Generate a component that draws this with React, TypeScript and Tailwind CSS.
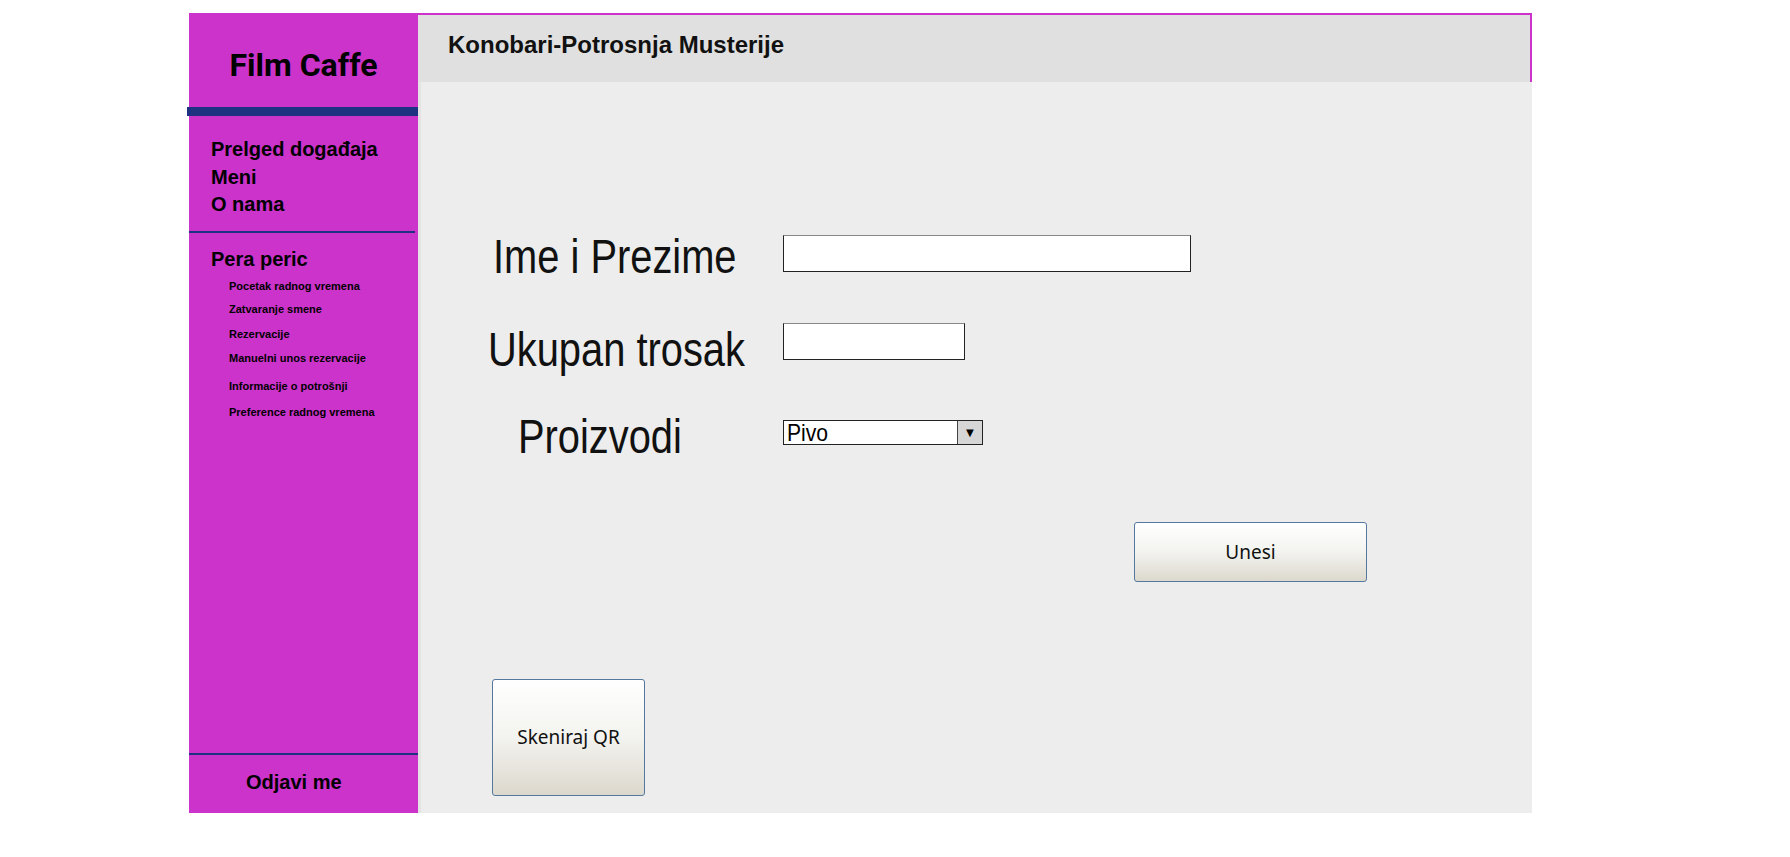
import React from "react";

const subItems = [
  { label: "Pocetak radnog vremena", mt: "mt-[9px]" },
  { label: "Zatvaranje smene", mt: "mt-[10px]" },
  { label: "Rezervacije", mt: "mt-[12px]" },
  { label: "Manuelni unos rezervacije", mt: "mt-[11px]" },
  { label: "Informacije o potrošnji", mt: "mt-[15px]" },
  { label: "Preference radnog vremena", mt: "mt-[13px]" },
];

function Sidebar() {
  return (
    <div className="w-[229px] h-full bg-[#cb33cb] flex flex-col font-['Liberation_Sans',Arial,sans-serif] text-black">
      <div className="h-[94px] pt-[33px] text-center font-['Roboto',sans-serif] font-bold text-[32px] leading-[38px]">
        Film Caffe
      </div>
      <div className="h-[9px] w-[234px] -ml-[2px] bg-[#1f3282]" />

      <div className="mt-[20px] pl-[22px] font-bold text-[20px] leading-[27.5px]">
        <div>Prelged događaja</div>
        <div>Meni</div>
        <div>O nama</div>
      </div>
      <div className="mt-[12px] h-[2px] w-[226px] bg-[#1f3282]" />

      <div className="mt-[14px] pl-[22px] font-bold text-[20px] leading-[24px]">Pera peric</div>
      <div className="pl-[40px]">
        {subItems.map((s) => (
          <div key={s.label} className={`${s.mt} font-bold text-[11px] leading-[13px]`}>
            {s.label}
          </div>
        ))}
      </div>

      <div className="mt-auto h-[60px]">
        <div className="h-[2px] bg-[#1f3282]" />
        <div className="mt-[15px] pl-[57px] font-bold text-[20px] leading-[24px]">Odjavi me</div>
      </div>
    </div>
  );
}

// the labels use a condensed Arial; no narrow face is installed, so squeeze it
function FormLabel({ text, indent }: { text: string; indent: string }) {
  return (
    <div className="w-[295px] shrink-0">
      <div
        className={`${indent} inline-block origin-left scale-x-[0.83] font-['Liberation_Sans',Arial,sans-serif] text-[48px] leading-[48px] text-[#111] whitespace-nowrap`}
      >
        {text}
      </div>
    </div>
  );
}

function WinButton({ children, className }: { children: React.ReactNode; className: string }) {
  return (
    <button
      className={`${className} flex items-center justify-center rounded-[3px] border border-[#55789f] bg-gradient-to-b from-[#ffffff] via-[#f3f3ef] to-[#dcd8cd] font-['Noto_Sans',sans-serif] text-[19px] text-[#111]`}
    >
      {children}
    </button>
  );
}

export default function App() {
  return (
    <div className="w-[1790px] h-[857px] bg-white overflow-hidden">
      <div className="flex pt-[13px] pl-[189px] h-[813px]">
        <Sidebar />
        <div className="w-[1114px] h-full flex flex-col">
          <div className="h-[69px] shrink-0 bg-[#e0e0e0] border-t-2 border-r-2 border-[#cb33cb] pt-[16px] pl-[30px]">
            <div className="font-['Liberation_Sans',Arial,sans-serif] font-bold text-[24px] leading-[28px] text-[#111]">
              Konobari-Potrosnja Musterije
            </div>
          </div>
          <div className="flex-1 bg-[#ededed] border-l-[3px] border-[#e3e3e3] pl-[67px] pt-[151px]">
            <div className="flex items-start">
              <FormLabel text="Ime i Prezime" indent="ml-[5px]" />
              <div className="mt-[2px] w-[408px] h-[37px] bg-white border border-[#222] border-t-[#888]" />
            </div>
            <div className="flex items-start mt-[42px]">
              <div className="mt-[3px]">
                <FormLabel text="Ukupan trosak" indent="ml-0" />
              </div>
              <div className="w-[182px] h-[37px] bg-white border border-[#222] border-t-[#888]" />
            </div>
            <div className="flex items-start mt-[39px]">
              <FormLabel text="Proizvodi" indent="ml-[30px]" />
              <div className="mt-[7px] w-[200px] h-[25px] bg-white border border-[#222] flex">
                <div className="flex-1 pl-[3px]">
                  <span className="inline-block origin-left scale-x-[0.88] font-['Liberation_Sans',Arial,sans-serif] text-[24px] leading-[23px] text-black">
                    Pivo
                  </span>
                </div>
                <div className="w-[25px] h-full bg-[#d6d6d6] border-l border-[#444] flex items-center justify-center text-[13px] leading-none text-black">
                  ▼
                </div>
              </div>
            </div>

            <div className="mt-[61px] ml-[646px]">
              <WinButton className="w-[233px] h-[60px]">Unesi</WinButton>
            </div>
            <div className="mt-[97px] ml-[4px]">
              <WinButton className="w-[153px] h-[117px]">Skeniraj QR</WinButton>
            </div>
          </div>
        </div>
      </div>
    </div>
  );
}
